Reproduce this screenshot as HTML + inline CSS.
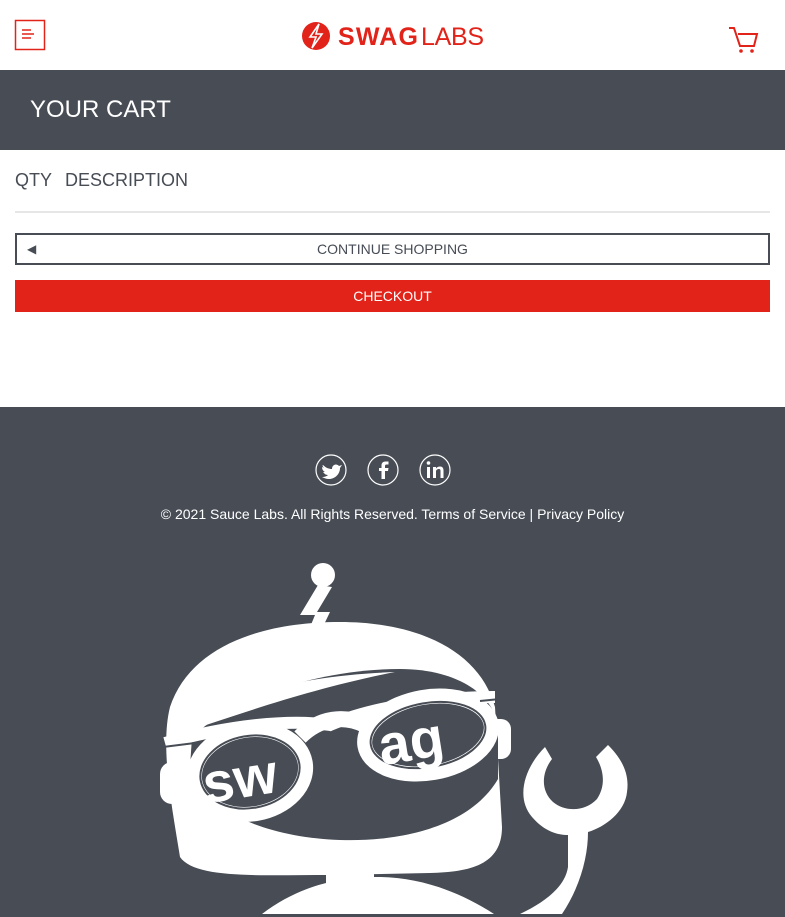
<!DOCTYPE html>
<html><head><meta charset="utf-8"><style>
*{margin:0;padding:0;box-sizing:border-box}
body{width:785px;height:917px;overflow:hidden;font-family:"Liberation Sans",sans-serif;background:#fff;position:relative}
.hdr{height:70px;position:relative}
.sub{position:absolute;top:70px;left:0;width:785px;height:80px;background:#474c55;color:#fff;font-size:24px;padding:26px 30px}
.cols{position:absolute;top:170px;font-size:18px;color:#474c55}
.line{position:absolute;top:211px;left:15px;width:755px;height:2px;background:#e6e6e6}
.btn1{position:absolute;top:233px;left:15px;width:755px;height:32px;border:2px solid #474c55;color:#474c55;font-size:14px;text-align:center;line-height:28px}
.btn2{position:absolute;top:280px;left:15px;width:755px;height:32px;background:#e2231a;color:#fff;font-size:14px;text-align:center;line-height:32px}
.foot{position:absolute;top:407px;left:0;width:785px;height:510px;background:#474c55}
.copy{position:absolute;top:99px;width:785px;text-align:center;color:#fff;font-size:14px}
</style></head><body>
<div class="hdr">
<svg width="785" height="70" style="position:absolute;left:0;top:0">
<rect x="15.5" y="20.5" width="29" height="29" fill="none" stroke="#e2231a" stroke-width="1.5"/>
<path d="M22 30h9M22 34h12M22 38h9" stroke="#e2231a" stroke-width="1.5"/>
<circle cx="316" cy="36" r="14" fill="#e2231a"/>
<path d="M319 24l-9 13h6l-4 11 10-14h-6z" fill="none" stroke="#fff" stroke-width="1.6"/>
<text x="338" y="45" font-family="Liberation Sans" font-size="25" font-weight="bold" fill="#e2231a" textLength="80" lengthAdjust="spacing">SWAG</text>
<text x="421" y="45" font-family="Liberation Sans" font-size="25" fill="#e2231a" textLength="63" lengthAdjust="spacing">LABS</text>
<path d="M729 28h5l6 18h14l3-12h-19" fill="none" stroke="#e2231a" stroke-width="2"/>
<circle cx="741" cy="51" r="1.8" fill="#e2231a"/><circle cx="752" cy="51" r="1.8" fill="#e2231a"/>
</svg></div>
<div class="sub">YOUR CART</div>
<div class="cols" style="left:15px">QTY</div>
<div class="cols" style="left:65px">DESCRIPTION</div>
<div class="line"></div>
<div class="btn1"><span style="position:absolute;left:10px;font-size:12px">◀</span>CONTINUE SHOPPING</div>
<div class="btn2">CHECKOUT</div>
<div class="foot">
<svg width="785" height="510" style="position:absolute;left:0;top:0">
<g fill="none" stroke="#fff" stroke-width="1.2"><circle cx="331" cy="63" r="15"/><circle cx="383" cy="63" r="15"/><circle cx="435" cy="63" r="15"/></g>
<path d="M323 58c3 3 6 4 9 4 0-4 4-6 7-3l3-1-2 3c0 6-5 11-11 11-3 0-5-1-7-2 3 0 5-1 6-2-3 0-4-2-5-3h2c-2-1-3-3-3-5l2 1c-1-1-2-3-1-3z" fill="#fff"/>
<path d="M385 72v-8h3l.5-3H385v-2c0-1 .5-1.5 1.5-1.5h2v-3h-3c-3 0-4 2-4 4v2.5h-2.5v3h2.5v8z" fill="#fff"/>
<rect x="427" y="60" width="3" height="11" fill="#fff"/><circle cx="428.5" cy="56" r="1.8" fill="#fff"/>
<path d="M433 71V60h3v1.5c1-1.5 2.5-2 4-2 2.5 0 3.5 1.5 3.5 4V71h-3v-7c0-1.5-.5-2-1.5-2s-3 .5-3 2.5V71z" fill="#fff"/>
<g fill="#fff">
<circle cx="323" cy="168" r="12"/>
<path d="M318 178l-18 30h15l-9 22h12l12-25h-13l15-25z"/>
<path d="M180 450C172 400 160 340 170 300 190 240 260 215 340 215 420 215 480 245 495 300L502 420C502 458 470 465 430 466L330 468C260 468 195 472 180 450z"/>
<rect x="160" y="355" width="30" height="42" rx="12"/>
<rect x="488" y="312" width="23" height="40" rx="10"/>
<rect x="326" y="455" width="48" height="30"/>
<path d="M262 507C300 478 340 470 378 470 420 470 460 485 494 507z"/>
<path d="M545 340C525 360 515 390 532 410 545 425 558 428 568 428L568 460C565 480 545 495 520 507L562 507C580 480 588 450 588 425 605 420 625 405 627 385 630 365 620 350 608 338L596 350C605 365 605 380 597 392 585 405 565 405 553 395 540 383 542 365 552 352z"/>
</g>
<path d="M192 330C240 285 330 262 400 262 460 262 495 290 498 320L498 372C470 420 400 435 340 433 260 430 200 400 190 360z" fill="#474c55"/>
<path d="M200 320C240 280 320 268 395 265 320 280 260 300 200 320z" fill="#fff"/>
<g fill="none" stroke="#fff">
<path d="M165 336C230 318 290 312 330 318 360 305 420 290 495 290" stroke-width="12"/>
<path d="M300 330C320 310 345 308 365 318" stroke-width="16"/>
</g>
<g fill="#474c55" stroke="#fff" stroke-width="15">
<ellipse cx="250" cy="365" rx="56" ry="42" transform="rotate(-10 250 365)"/>
<ellipse cx="428" cy="328" rx="64" ry="38" transform="rotate(-10 428 328)"/>
</g>
<g fill="none" stroke="#474c55" stroke-width="2">
<ellipse cx="250" cy="365" rx="50" ry="36" transform="rotate(-10 250 365)"/>
<ellipse cx="428" cy="328" rx="58" ry="32" transform="rotate(-10 428 328)"/>
<path d="M163 340L195 336M480 294L500 292"/>
</g>
<text x="203" y="390" font-family="Liberation Sans" font-size="56" font-weight="bold" fill="#fff" transform="rotate(-9 245 375)">sw</text>
<text x="380" y="352" font-family="Liberation Sans" font-size="56" font-weight="bold" fill="#fff" transform="rotate(-9 420 345)">ag</text>
</svg>
<div class="copy">© 2021 Sauce Labs. All Rights Reserved. Terms of Service | Privacy Policy</div>
</div>
</body></html>
